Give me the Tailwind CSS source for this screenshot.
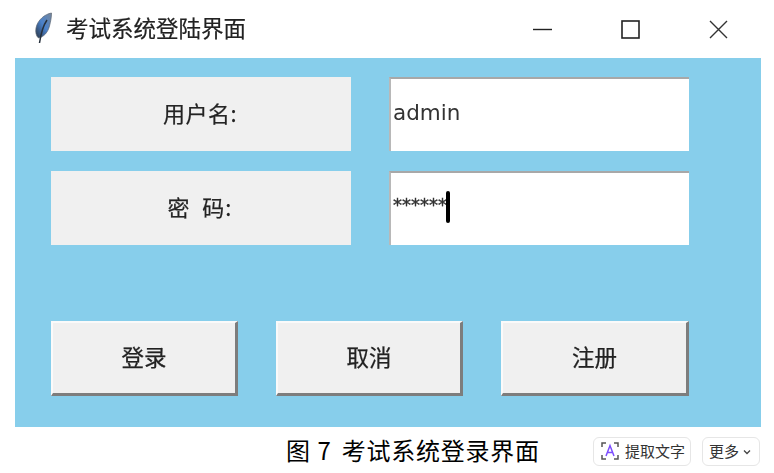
<!DOCTYPE html>
<html lang="zh-CN">
<head>
  <meta charset="UTF-8" />
  <title>考试系统登陆界面</title>
  <script src="https://cdn.jsdelivr.net/npm/@tailwindcss/browser@4"></script>
</head>
<body class="bg-white w-[774px] h-[473px] overflow-hidden font-['Noto_Sans_CJK_SC','Noto_Sans',sans-serif] text-[#222]">

  <!-- Title bar -->
  <div class="h-[58px] ml-[15px] w-[746px] flex items-center">
    <svg class="ml-[19px] mt-[-3px] w-[20px] h-[32px]" viewBox="0 0 20 32">
      <defs>
        <linearGradient id="feather" x1="0" y1="1" x2="1" y2="0">
          <stop offset="0" stop-color="#2a3545" />
          <stop offset="0.5" stop-color="#4a82cc" />
          <stop offset="1" stop-color="#77879b" />
        </linearGradient>
      </defs>
      <path d="M17.5 1 C11 2 3.5 8 2 16 C1.3 20 2 24 4.5 26 C10 25 14 20 15.5 14 C16.8 9 17.5 5 17.5 1 Z" fill="url(#feather)" stroke="#5c6672" stroke-width="0.7" />
      <path d="M13 8 C9.5 13 7 21 5.5 31" fill="none" stroke="#26303c" stroke-width="1.5" />
    </svg>
    <span class="ml-[12px] -mt-[3px] text-[22.5px] leading-none blur-[0.4px] [-webkit-text-stroke:0.2px_#222]">考试系统登陆界面</span>
    <div class="ml-auto mr-[33px] flex items-center gap-[69px]">
      <svg class="w-[19px] h-[19px]" viewBox="0 0 19 19"><path d="M0 9.5H19" stroke="#222" stroke-width="1.4" /></svg>
      <svg class="w-[19px] h-[19px]" viewBox="0 0 19 19"><rect x="1" y="1" width="17" height="17" fill="none" stroke="#222" stroke-width="1.6" /></svg>
      <svg class="w-[19px] h-[19px]" viewBox="0 0 19 19"><path d="M1 1L18 18M18 1L1 18" stroke="#333" stroke-width="1.4" /></svg>
    </div>
  </div>

  <!-- Window body -->
  <div class="ml-[15px] w-[746px] h-[369px] bg-[#87ceeb] pt-[19px] pl-[36px]">
    <div class="grid grid-cols-[300px_300px] gap-x-[38px] gap-y-[20px]">
      <div class="h-[74px] bg-[#f0f0f0] flex items-center justify-center pb-[3px] pr-[2px] text-[22px] tracking-[0.5px] blur-[0.5px] [-webkit-text-stroke:0.25px_#333]">用户名:</div>
      <div class="h-[74px] bg-white border-t-2 border-l-2 border-t-[#a8a8a8] border-l-[#b8b8b8] flex items-center pl-[2px] pb-[3px] font-['DejaVu_Sans',sans-serif] text-[21.5px] text-[#333] blur-[0.4px]">admin</div>
      <div class="h-[74px] bg-[#f0f0f0] flex items-center justify-center pb-[3px] pr-[2px] text-[22px] tracking-[1px] blur-[0.5px] [-webkit-text-stroke:0.25px_#333]">密&nbsp;&nbsp;码:</div>
      <div class="h-[74px] bg-white border-t-2 border-l-2 border-t-[#a8a8a8] border-l-[#b8b8b8] flex items-center pl-[2px] pb-[3px] blur-[0.3px]">
        <span class="font-['DejaVu_Sans',sans-serif] text-[18px] leading-none -mt-[6px] text-[#333] [-webkit-text-stroke:0.4px_#333]">******</span>
        <span class="w-[4px] h-[32px] bg-black rounded-sm -ml-[1px] -mt-[1px]"></span>
      </div>
    </div>
    <div class="mt-[76px] flex gap-[38px] text-[22.5px]">
      <button class="w-[187px] h-[75px] pb-[3px] bg-[#f0f0f0] border-2 border-r-[3px] border-b-[3px] border-t-[#fafafa] border-l-[#fafafa] border-r-[#7d7d7d] border-b-[#7d7d7d] blur-[0.5px] [-webkit-text-stroke:0.25px_#222]">登录</button>
      <button class="w-[187px] h-[75px] pb-[3px] bg-[#f0f0f0] border-2 border-r-[3px] border-b-[3px] border-t-[#fafafa] border-l-[#fafafa] border-r-[#7d7d7d] border-b-[#7d7d7d] blur-[0.5px] [-webkit-text-stroke:0.25px_#222]">取消</button>
      <button class="w-[188px] h-[75px] pb-[3px] bg-[#f0f0f0] border-2 border-r-[3px] border-b-[3px] border-t-[#fafafa] border-l-[#fafafa] border-r-[#7d7d7d] border-b-[#7d7d7d] blur-[0.5px] [-webkit-text-stroke:0.25px_#222]">注册</button>
    </div>
  </div>

  <!-- Caption row -->
  <div class="h-[46px] flex items-center pl-[286px]">
    <div class="w-[254px] flex text-[24px] leading-none text-black whitespace-nowrap">
      <span class="[word-spacing:2px]">图 7</span>
      <span class="ml-[11px] tracking-[0.75px]">考试系统登录界面</span>
    </div>
    <div class="ml-[53px] mt-[2px] w-[98px] h-[29px] rounded-md border border-[#e6e6e6] flex items-center pl-[7px] text-[15px] text-[#333]">
      <svg class="w-[18px] h-[18px] mr-[6px]" viewBox="0 0 18 18" fill="none">
        <path d="M1 5V1H5M13 1H17V5M17 13V17H13M5 17H1V13" stroke="#555" stroke-width="1.5" />
        <path d="M5 14L9 3.5L13 14M6.5 10.5H11.5" stroke="#7c4dff" stroke-width="1.5" />
      </svg>
      <span>提取文字</span>
    </div>
    <div class="ml-[11px] mt-[2px] w-[58px] h-[29px] rounded-md border border-[#e6e6e6] flex items-center pl-[6px] text-[15px] text-[#333]">
      <span>更多</span>
      <svg class="w-[8px] h-[8px] ml-[4px] mt-[2px]" viewBox="0 0 8 8" fill="none"><path d="M1 2.5L4 5.5L7 2.5" stroke="#444" stroke-width="1.3" /></svg>
    </div>
  </div>
</body>
</html>
